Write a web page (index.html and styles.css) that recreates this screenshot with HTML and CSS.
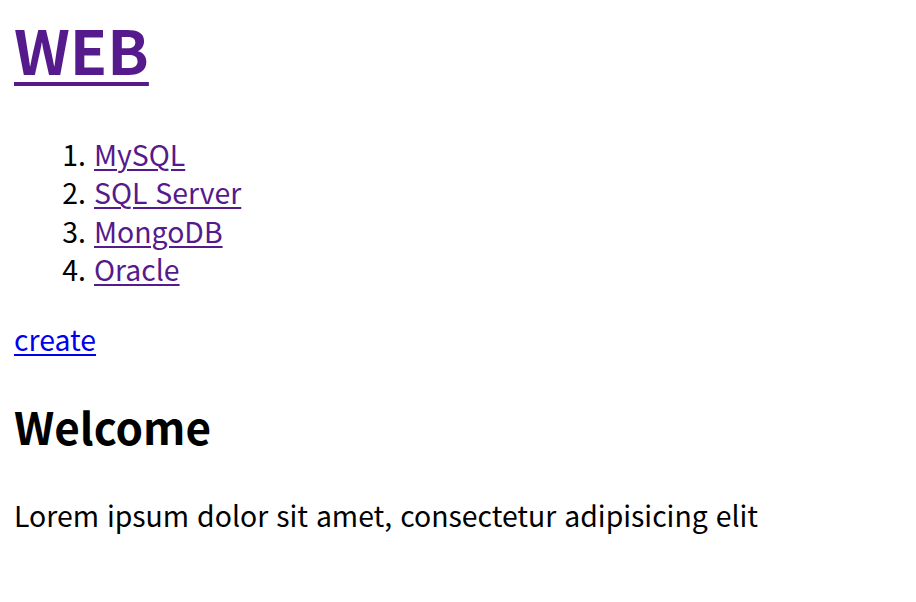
FILE: index.html
```html
<!DOCTYPE html>
<html lang="ko">
<head>
<meta charset="utf-8">
<title>WEB</title>
<link rel="stylesheet" href="styles.css">
</head>
<body>
<h1 class="title"><a class="visited" href="index.html">WEB</a></h1>
<ol class="list">
  <li><a class="visited" href="1.html">MySQL</a></li>
  <li><a class="visited" href="2.html">SQL Server</a></li>
  <li><a class="visited" href="3.html">MongoDB</a></li>
  <li><a class="visited" href="4.html">Oracle</a></li>
</ol>
<p class="create-row"><a class="create" href="create.html">create</a></p>
<h2 class="heading">Welcome</h2>
<p class="body-text">Lorem ipsum dolor sit amet, consectetur adipisicing elit</p>
</body>
</html>
```
FILE: styles.css
```css
html { background: #fff; }
body {
  margin: 0;
  padding: 16px 14px 0 14px;
  font-family: "Noto Sans CJK KR", sans-serif;
  font-size: 28.4px;
  line-height: 38.4px;
  color: #000;
}
a {
  text-decoration-line: underline;
  text-decoration-thickness: 2px;
  text-underline-offset: 3px;
}
a.visited { color: #551a8b; }
a.create { color: #0000ee; }
.title {
  margin: 0 0 54px;
  font-size: 61px;
  line-height: 65px;
  font-weight: 700;
}
.title a {
  text-decoration-thickness: 4px;
  text-underline-offset: 7px;
}
.list {
  margin: 0;
  padding-left: 80px;
}
.create-row {
  margin: 31px 0 0;
}
.heading {
  margin: 42px 0 0;
  font-size: 44px;
  line-height: 52px;
  font-weight: 700;
}
.body-text {
  margin: 44px 0 0;
}
```
